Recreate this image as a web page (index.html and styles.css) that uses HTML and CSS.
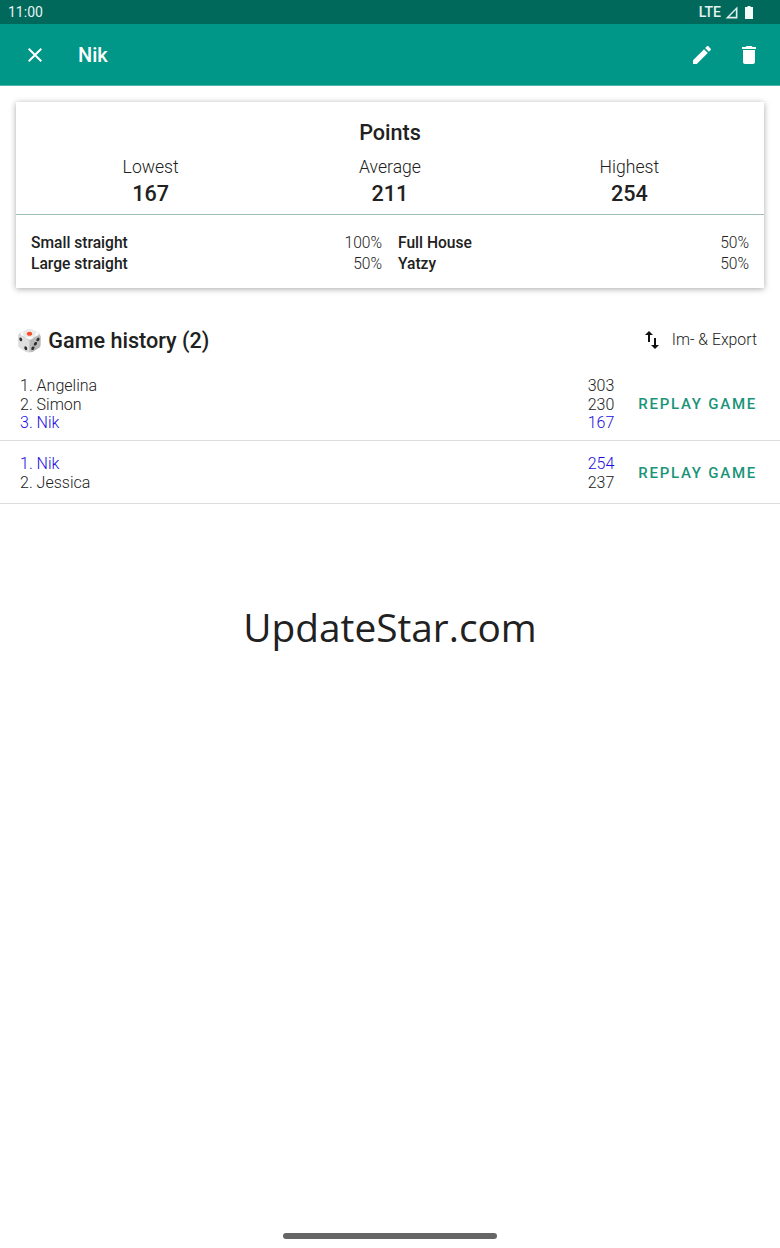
FILE: index.html
```html
<!DOCTYPE html>
<html lang="en">
<head>
    <meta charset="UTF-8">
    <title>Nik</title>
    <link rel="stylesheet" href="styles.css">
</head>
<body>
    <div class="status-bar">
        <span class="clock">11:00</span>
        <div class="status-icons">
            <span class="network">LTE</span>
            <svg class="signal" width="13" height="13" viewBox="0 0 12 12"><path d="M11.5 0.5V11.5H0.5Z M10 3.8L4 10H10Z" fill="#dff0ec" fill-rule="evenodd"/></svg>
            <svg class="battery" width="8" height="13" viewBox="0 0 8 13"><path d="M2.5 0H5.5V1H8V13H0V1H2.5Z" fill="#f2faf8"/></svg>
        </div>
    </div>

    <header class="app-bar">
        <svg class="close-icon" width="24" height="24" viewBox="0 0 24 24"><path d="M19 6.41 17.59 5 12 10.59 6.41 5 5 6.41 10.59 12 5 17.59 6.41 19 12 13.41 17.59 19 19 17.59 13.41 12z" fill="#fff"/></svg>
        <div class="app-title">Nik</div>
        <svg class="edit-icon" width="24" height="24" viewBox="0 0 24 24"><path d="M3 17.25V21h3.75L17.81 9.94l-3.75-3.75L3 17.25zM20.71 7.04c.39-.39.39-1.02 0-1.41l-2.34-2.34c-.39-.39-1.02-.39-1.41 0l-1.83 1.83 3.75 3.75 1.83-1.83z" fill="#fff"/></svg>
        <svg class="delete-icon" width="24" height="24" viewBox="0 0 24 24"><path d="M6 19c0 1.1.9 2 2 2h8c1.1 0 2-.9 2-2V7H6v12zM19 4h-3.5l-1-1h-5l-1 1H5v2h14V4z" fill="#fff"/></svg>
    </header>

    <section class="card">
        <div class="card-top">
            <h2 class="card-title">Points</h2>
            <div class="stats">
                <div class="stat"><div class="stat-label">Lowest</div><div class="stat-value">167</div></div>
                <div class="stat"><div class="stat-label">Average</div><div class="stat-value">211</div></div>
                <div class="stat"><div class="stat-label">Highest</div><div class="stat-value">254</div></div>
            </div>
        </div>
        <div class="rates">
            <div class="rate"><strong>Small straight</strong><span>100%</span></div>
            <div class="rate"><strong>Full House</strong><span>50%</span></div>
            <div class="rate"><strong>Large straight</strong><span>50%</span></div>
            <div class="rate"><strong>Yatzy</strong><span>50%</span></div>
        </div>
    </section>

    <div class="history-head">
        <h2 class="history-title"><span class="dice">🎲</span> Game history (2)</h2>
        <div class="export">
            <svg class="swap-icon" width="24" height="24" viewBox="0 0 24 24"><path d="M16 17.01V10h-2v7.01h-3L15 21l4-3.99h-3zM9 3 5 6.99h3V14h2V6.99h3L9 3z" fill="#111"/></svg>
            <span>Im- &amp; Export</span>
        </div>
    </div>

    <div class="game first">
        <div class="players">
            <div class="player"><span>1. Angelina</span><span>303</span></div>
            <div class="player"><span>2. Simon</span><span>230</span></div>
            <div class="player me"><span>3. Nik</span><span>167</span></div>
        </div>
        <div class="replay">REPLAY GAME</div>
    </div>
    <div class="game">
        <div class="players">
            <div class="player me"><span>1. Nik</span><span>254</span></div>
            <div class="player"><span>2. Jessica</span><span>237</span></div>
        </div>
        <div class="replay">REPLAY GAME</div>
    </div>

    <div class="watermark">UpdateStar.com</div>
    <div class="nav-handle"></div>
</body>
</html>
```

FILE: styles.css
```css
html, body {
    margin: 0;
    padding: 0;
}
body {
    width: 780px;
    height: 1248px;
    position: relative;
    overflow: hidden;
    background: #fff;
    font-family: Roboto, sans-serif;
    color: #212121;
}
.status-bar {
    height: 24px;
    background: #00695c;
    color: #e6f3f0;
    display: flex;
    align-items: center;
    justify-content: space-between;
    padding: 0 27px 0 8px;
    font-size: 14px;
}
.status-icons {
    display: flex;
    align-items: center;
    gap: 4px;
}
.network {
    font-size: 14px;
    font-weight: 500;
}
.signal {
    margin-right: 3px;
}
.app-bar {
    height: 62px;
    background: #009688;
    box-sizing: border-box;
    border-bottom: 1px solid #4db6ac;
    display: flex;
    align-items: center;
    padding: 0 19px 0 23px;
    color: #fff;
}
.app-title {
    flex: 1;
    margin-left: 31px;
    font-size: 20px;
    font-weight: 500;
}
.edit-icon {
    margin-right: 23px;
}
.card {
    margin: 16px 16px 0;
    height: 186px;
    box-shadow: 0 1px 6px rgba(0,0,0,0.35);
    background: #fff;
}
.card-top {
    height: 113px;
    box-sizing: border-box;
    border-bottom: 1px solid #9dbfb6;
    padding-top: 19px;
    text-align: center;
}
.card-title {
    margin: 0;
    font-size: 21.6px;
    line-height: 24px;
    font-weight: 500;
}
.stats {
    display: grid;
    grid-template-columns: repeat(3, 1fr);
    margin: 0 15px;
    padding-top: 10px;
}
.stat-label {
    font-size: 17.6px;
    font-weight: 300;
    line-height: 24px;
}
.stat-value {
    font-size: 21.6px;
    font-weight: 500;
    line-height: 29px;
}
.rates {
    display: grid;
    grid-template-columns: 351px 351px;
    column-gap: 16px;
    padding: 18px 15px 0;
}
.rate {
    display: flex;
    justify-content: space-between;
    font-size: 15.6px;
    line-height: 21px;
}
.rate strong {
    font-weight: 500;
}
.rate span {
    font-weight: 300;
}
.history-head {
    display: flex;
    align-items: center;
    justify-content: space-between;
    margin-top: 35px;
    padding: 0 23px 0 16px;
    height: 34px;
}
.history-title {
    margin: 0;
    font-size: 21.6px;
    font-weight: 500;
}
.dice {
    font-size: 21.6px;
}
.export {
    display: flex;
    align-items: center;
    gap: 8px;
    font-size: 15.8px;
    font-weight: 300;
    padding-bottom: 1px;
}
.game {
    display: flex;
    align-items: center;
    padding: 14px 23px 11px 20px;
    border-bottom: 1px solid #ddd;
}
.game.first {
    margin-top: 20px;
    padding-top: 0;
    padding-bottom: 7.5px;
}
.players {
    flex: 1;
}
.player {
    display: flex;
    justify-content: space-between;
    font-size: 16px;
    font-weight: 300;
    line-height: 18.5px;
}
.player.me {
    color: #1a0de0;
}
.replay {
    margin-left: 24px;
    padding-bottom: 2px;
    font-size: 15px;
    font-weight: 500;
    letter-spacing: 1.75px;
    color: #1a9478;
}
.watermark {
    position: absolute;
    left: 0;
    right: 0;
    top: 600px;
    text-align: center;
    font-family: "Open Sans", sans-serif;
    font-size: 38.8px;
    font-weight: 400;
    line-height: 54px;
}
.nav-handle {
    position: absolute;
    left: 283px;
    top: 1233px;
    width: 214px;
    height: 6px;
    border-radius: 3px;
    background: #666;
}
```
